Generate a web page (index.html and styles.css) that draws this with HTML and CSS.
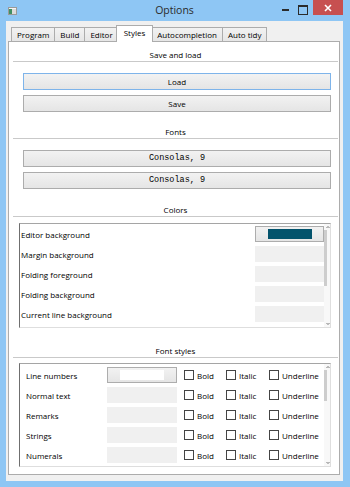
FILE: index.html
```html
<!DOCTYPE html>
<html lang="en">
<head>
  <meta charset="UTF-8">
  <title>Options</title>
  <link rel="stylesheet" href="styles.css">
</head>
<body>

  <div class="window">
    <div class="titlebar">
      <svg class="app-icon" width="9" height="8" viewBox="0 0 9 8">
        <rect x="0.5" y="0.5" width="8" height="7" fill="#f4f4f4" stroke="#9a9a9a"/>
        <rect x="1" y="2" width="3" height="5" fill="#3f8f62"/>
        <rect x="4" y="2" width="4" height="5" fill="#dcdcdc"/>
      </svg>
      <div class="title">Options</div>
      <div class="controls">
        <div class="ctl min"></div>
        <div class="ctl max"></div>
        <div class="ctl close">
          <svg width="8" height="8" viewBox="0 0 8 8">
            <path d="M1 1 L7 7 M7 1 L1 7" stroke="#fff" stroke-width="1.6"/>
          </svg>
        </div>
      </div>
    </div>

    <div class="client">
      <div class="tabs">
        <div class="tab">Program</div>
        <div class="tab">Build</div>
        <div class="tab">Editor</div>
        <div class="tab active">Styles</div>
        <div class="tab">Autocompletion</div>
        <div class="tab">Auto tidy</div>
      </div>

      <div class="pane">
        <div class="group-title">Save and load</div>
        <div class="btn first focus">Load</div>
        <div class="btn">Save</div>

        <div class="group-title after-buttons">Fonts</div>
        <div class="btn first mono">Consolas, 9</div>
        <div class="btn mono">Consolas, 9</div>

        <div class="group-title after-fonts">Colors</div>
        <div class="list colors">
          <div class="rows">
            <div class="color-row">
              <span>Editor background</span>
              <div class="swatch active"><div class="swatch-fill teal"></div></div>
            </div>
            <div class="color-row"><span>Margin background</span><div class="swatch"></div></div>
            <div class="color-row"><span>Folding foreground</span><div class="swatch"></div></div>
            <div class="color-row"><span>Folding background</span><div class="swatch"></div></div>
            <div class="color-row"><span>Current line background</span><div class="swatch"></div></div>
          </div>
          <div class="vscroll">
            <svg class="arrow" width="4" height="6" viewBox="0 0 4 6"><path d="M0.5 4 L2 2.5 L3.5 4" fill="none" stroke="#555" stroke-width="0.8"/></svg>
            <div class="track"><div class="thumb colors-thumb"></div></div>
            <svg class="arrow" width="4" height="6" viewBox="0 0 4 6"><path d="M0.5 2 L2 3.5 L3.5 2" fill="none" stroke="#555" stroke-width="0.8"/></svg>
          </div>
        </div>

        <div class="group-title after-colors">Font styles</div>
        <div class="list styles">
          <div class="rows">
            <div class="style-row">
              <span>Line numbers</span>
              <div class="swatch active"><div class="swatch-fill white"></div></div>
              <label class="check"><span class="box"></span>Bold</label>
              <label class="check"><span class="box"></span>Italic</label>
              <label class="check"><span class="box"></span>Underline</label>
            </div>
            <div class="style-row">
              <span>Normal text</span>
              <div class="swatch"></div>
              <label class="check"><span class="box"></span>Bold</label>
              <label class="check"><span class="box"></span>Italic</label>
              <label class="check"><span class="box"></span>Underline</label>
            </div>
            <div class="style-row">
              <span>Remarks</span>
              <div class="swatch"></div>
              <label class="check"><span class="box"></span>Bold</label>
              <label class="check"><span class="box"></span>Italic</label>
              <label class="check"><span class="box"></span>Underline</label>
            </div>
            <div class="style-row">
              <span>Strings</span>
              <div class="swatch"></div>
              <label class="check"><span class="box"></span>Bold</label>
              <label class="check"><span class="box"></span>Italic</label>
              <label class="check"><span class="box"></span>Underline</label>
            </div>
            <div class="style-row">
              <span>Numerals</span>
              <div class="swatch"></div>
              <label class="check"><span class="box"></span>Bold</label>
              <label class="check"><span class="box"></span>Italic</label>
              <label class="check"><span class="box"></span>Underline</label>
            </div>
          </div>
          <div class="vscroll">
            <svg class="arrow" width="4" height="6" viewBox="0 0 4 6"><path d="M0.5 4 L2 2.5 L3.5 4" fill="none" stroke="#555" stroke-width="0.8"/></svg>
            <div class="track"><div class="thumb styles-thumb"></div></div>
            <svg class="arrow" width="4" height="6" viewBox="0 0 4 6"><path d="M0.5 2 L2 3.5 L3.5 2" fill="none" stroke="#555" stroke-width="0.8"/></svg>
          </div>
        </div>
      </div>
    </div>
  </div>

</body>
</html>
```

FILE: styles.css
```css
* {
  box-sizing: border-box;
}
body {
  margin: 0;
  font-family: "Open Sans", "Noto Sans", sans-serif;
  font-size: 8px;
  color: #000;
}
.window {
  width: 350px;
  height: 487px;
  background: #8ec6f4;
  padding: 0 7px 6px 6px;
  display: flex;
  flex-direction: column;
}

/* title bar */
.titlebar {
  height: 21px;
  display: grid;
  grid-template-columns: 1fr auto 1fr;
  align-items: start;
}
.app-icon {
  margin: 7px 0 0 2px;
}
.title {
  font-size: 10.5px;
  line-height: 21px;
  color: #2b2b2b;
}
.controls {
  justify-self: end;
  display: flex;
}
.ctl {
  width: 18px;
  height: 15px;
  display: flex;
  justify-content: center;
  align-items: flex-start;
}
.ctl.min::before {
  content: "";
  width: 7px;
  height: 2px;
  margin-top: 9px;
  background: #2b2b2b;
}
.ctl.max::before {
  content: "";
  width: 8px;
  height: 7px;
  margin-top: 5px;
  border: 1px solid #2b2b2b;
  border-top-width: 2px;
}
.ctl.close {
  width: 30px;
  margin-left: 1px;
  background: #c75050;
  align-items: center;
}

/* client area and tabs */
.client {
  flex: 1;
  background: #f0f0f0;
  padding: 4px 3px 6px 2px;
  display: flex;
  flex-direction: column;
}
.tabs {
  display: flex;
  align-items: flex-end;
  height: 16px;
  margin-left: 3px;
  position: relative;
  z-index: 1;
}
.tab {
  height: 14px;
  padding: 0 5px;
  margin-left: -1px;
  line-height: 13px;
  border: 1px solid #acacac;
  border-bottom: none;
  background: linear-gradient(#f2f2f2, #e6e6e6);
}
.tab:first-child {
  margin-left: 0;
}
.tab.active {
  height: 17px;
  margin: 0 -2px -1px -3px;
  padding: 0 7px;
  line-height: 14px;
  background: #fff;
  position: relative;
  z-index: 2;
}
.tab.active + .tab {
  margin-left: 0;
}
.pane {
  flex: 1;
  background: #fff;
  border: 1px solid #acacac;
}

/* groups */
.group-title {
  height: 14px;
  margin: 6px 1px 0 4px;
  line-height: 13px;
  text-align: center;
  border-bottom: 1px solid #c9c9c9;
}
.group-title.after-buttons {
  margin-top: 13px;
}
.group-title.after-fonts {
  margin-top: 14px;
}
.group-title.after-colors {
  margin-top: 16px;
}
.btn {
  height: 17px;
  margin: 5px 8px 0 14px;
  line-height: 15px;
  text-align: center;
  border: 1px solid #acacac;
  background: linear-gradient(#f2f2f2, #e5e5e5);
}
.btn.first {
  margin-top: 11px;
}
.btn.focus {
  border-color: #7eb4ea;
}
.btn.mono {
  font-family: "Liberation Mono", monospace;
  font-size: 8.5px;
}

/* list boxes */
.list {
  margin: 6px 8px 0 10px;
  display: flex;
  border: 1px solid;
  border-color: #a5a5a5 #dedede #dedede #6f6f6f;
}
.list.colors {
  height: 105px;
}
.list.styles {
  height: 104px;
  margin-top: 5px;
}
.rows {
  flex: 1;
}
.list.styles .rows {
  padding-top: 1px;
}
.color-row {
  height: 20px;
  padding-left: 1px;
  display: flex;
  justify-content: space-between;
  align-items: center;
}
.swatch {
  height: 16px;
  background: #f0f0f0;
}
.color-row .swatch {
  width: 69px;
}
.swatch.active {
  border: 1px solid #adadad;
  background: linear-gradient(#f2f2f2, #e5e5e5);
  display: flex;
  justify-content: center;
  align-items: center;
}
.swatch-fill {
  width: 44px;
  height: 10px;
}
.swatch-fill.teal {
  background: #03536c;
}
.swatch-fill.white {
  background: #fff;
}
.style-row {
  height: 20px;
  padding-left: 6px;
  display: grid;
  grid-template-columns: 81px 77px 42px 43px 1fr;
  align-items: center;
}
.style-row .swatch {
  width: 70px;
}
.check {
  display: flex;
  align-items: center;
  gap: 3px;
}
.box {
  width: 10px;
  height: 10px;
  border: 1px solid #444;
  background: #fff;
}

/* thin scroll bars */
.vscroll {
  width: 6px;
  display: flex;
  flex-direction: column;
  align-items: flex-end;
  background: #f8f8f8;
}
.arrow {
  flex: none;
}
.track {
  flex: 1;
  width: 6px;
}
.thumb {
  width: 3px;
  background: #cdcdcd;
}
.colors-thumb {
  height: 56px;
}
.styles-thumb {
  height: 31px;
}
```
